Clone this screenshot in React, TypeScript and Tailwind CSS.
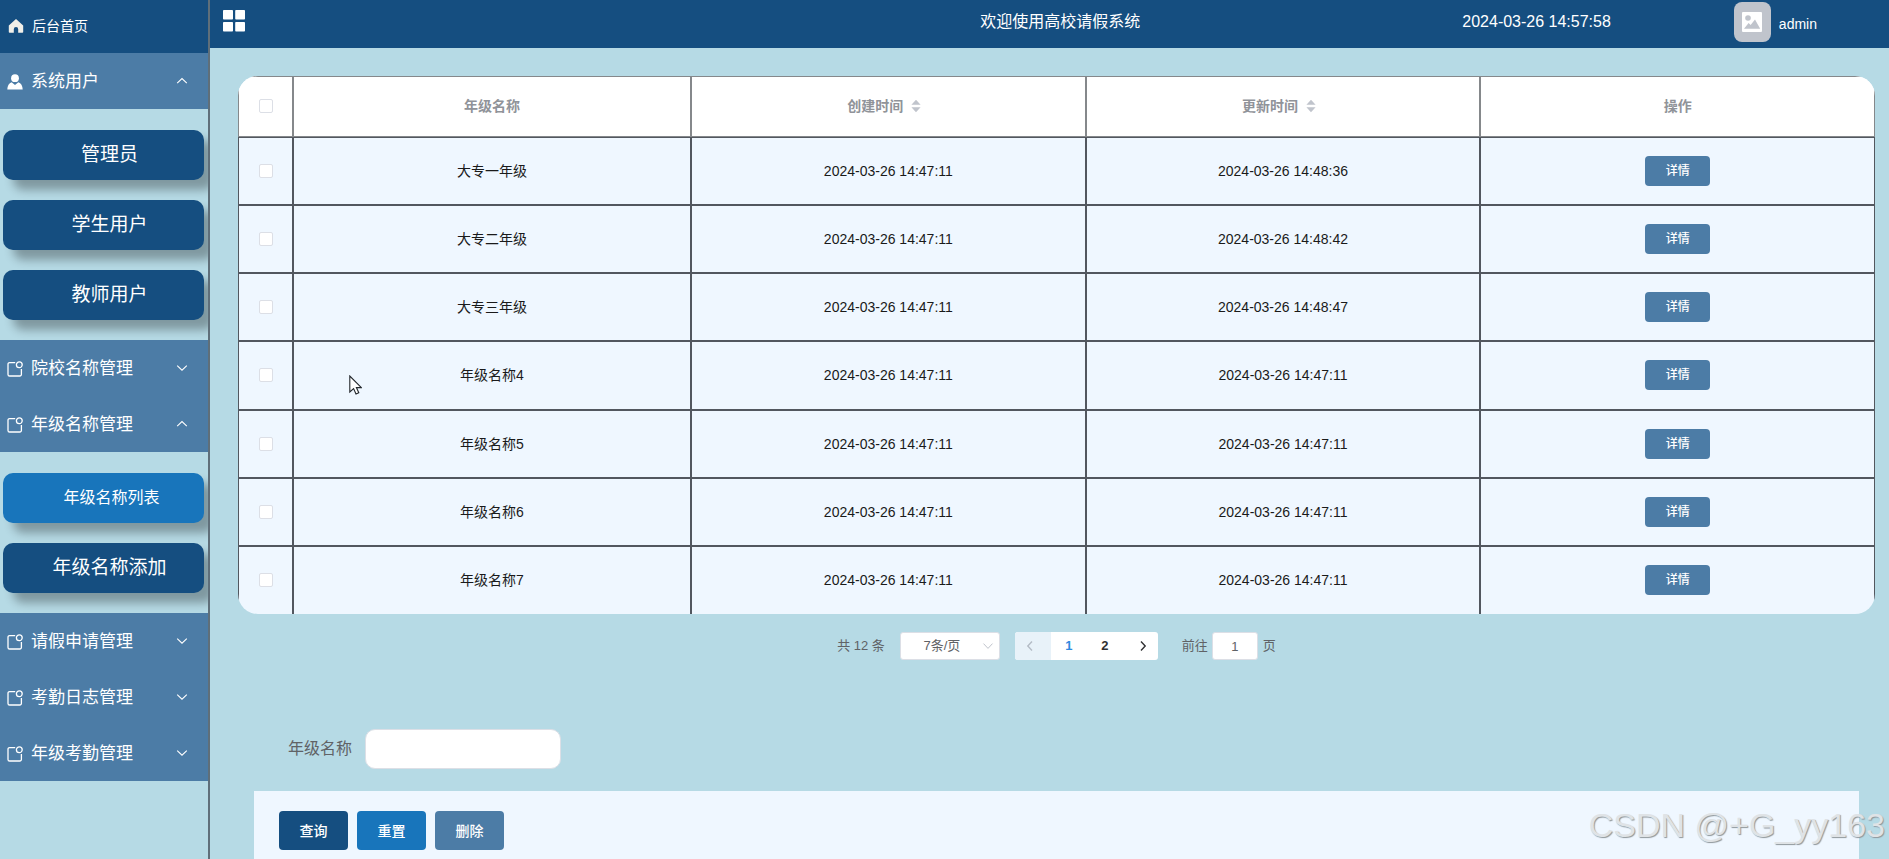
import { useState } from 'react'

type SubItem = { label: string; active?: boolean }
type Group = { label: string; icon: 'user' | 'module'; items?: SubItem[] }

const groups: Group[] = [
  {
    label: '系统用户',
    icon: 'user',
    items: [{ label: '管理员' }, { label: '学生用户' }, { label: '教师用户' }],
  },
  { label: '院校名称管理', icon: 'module' },
  {
    label: '年级名称管理',
    icon: 'module',
    items: [{ label: '年级名称列表', active: true }, { label: '年级名称添加' }],
  },
  { label: '请假申请管理', icon: 'module' },
  { label: '考勤日志管理', icon: 'module' },
  { label: '年级考勤管理', icon: 'module' },
]

const rows = [
  { name: '大专一年级', created: '2024-03-26 14:47:11', updated: '2024-03-26 14:48:36' },
  { name: '大专二年级', created: '2024-03-26 14:47:11', updated: '2024-03-26 14:48:42' },
  { name: '大专三年级', created: '2024-03-26 14:47:11', updated: '2024-03-26 14:48:47' },
  { name: '年级名称4', created: '2024-03-26 14:47:11', updated: '2024-03-26 14:47:11' },
  { name: '年级名称5', created: '2024-03-26 14:47:11', updated: '2024-03-26 14:47:11' },
  { name: '年级名称6', created: '2024-03-26 14:47:11', updated: '2024-03-26 14:47:11' },
  { name: '年级名称7', created: '2024-03-26 14:47:11', updated: '2024-03-26 14:47:11' },
]

function HomeIcon() {
  return (
    <svg viewBox="0 0 16 16" className="size-4 shrink-0 fill-[#f0efe9]" aria-hidden="true">
      <path d="M8 1 L15.2 7.4 V14 a.8 .8 0 0 1 -.8 .8 H10.2 V11.2 a2.2 2.2 0 0 0 -4.4 0 V14.8 H1.6 a.8 .8 0 0 1 -.8 -.8 V7.4 Z" />
    </svg>
  )
}

function UserIcon() {
  return (
    <svg viewBox="0 0 16 16" className="size-4 shrink-0 fill-white" aria-hidden="true">
      <circle cx="8" cy="4.2" r="3.9" />
      <path d="M4.6 8.2 L8 11 L11.4 8.2 C14 9 15.6 11.6 15.7 15.6 H.3 C.4 11.6 2 9 4.6 8.2 Z" />
    </svg>
  )
}

function ModuleIcon() {
  return (
    <svg viewBox="0 0 16 16" className="size-4 shrink-0 fill-none stroke-white" strokeWidth="1.3" aria-hidden="true">
      <path d="M8.2 1.6 H2.6 A1.6 1.6 0 0 0 1 3.2 V13.4 A1.6 1.6 0 0 0 2.6 15 H12.8 A1.6 1.6 0 0 0 14.4 13.4 V8" />
      <circle cx="12.3" cy="3.8" r="2.9" />
    </svg>
  )
}

function Chevron({ up }: { up?: boolean }) {
  return (
    <svg viewBox="0 0 12 12" className="mb-0.5 size-3 shrink-0 fill-none stroke-white" strokeWidth="1.1" aria-hidden="true">
      <path d={up ? 'M1.2 8.2 L6 3.6 L10.8 8.2' : 'M1.2 3.6 L6 8.2 L10.8 3.6'} />
    </svg>
  )
}

function SortIcon() {
  return (
    <svg viewBox="0 0 10 14" className="h-3.5 w-2.5 fill-[#c0c4cc]" aria-hidden="true">
      <path d="M5 .8 L9.6 5.8 H.4 Z M5 13.2 L9.6 8.2 H.4 Z" />
    </svg>
  )
}

function Sidebar() {
  return (
    <nav className="w-[210px] shrink-0 overflow-hidden border-r-2 border-[#5f6f7a] text-white">
      <a href="#home" className="flex h-[53px] items-center gap-2 bg-[#154e80] pb-0.5 pl-2 text-sm">
        <HomeIcon />
        后台首页
      </a>
      {groups.map((group) => (
        <section key={group.label}>
          <button type="button" className="flex h-14 w-full items-center gap-2 bg-[#4c7ca6] pt-0.5 pr-5 pl-[7px] text-left text-[17px]">
            {group.icon === 'user' ? <UserIcon /> : <ModuleIcon />}
            <span className="flex-1">{group.label}</span>
            <Chevron up={Boolean(group.items)} />
          </button>
          {group.items && (
            <ul className="flex flex-col gap-5 pt-[21px] pr-1 pb-5 pl-[3px]">
              {group.items.map((item) => (
                <li key={item.label}>
                  <a
                    href={`#${item.label}`}
                    className={
                      item.active
                        ? 'flex h-[50px] items-center justify-center rounded-[10px] bg-[#1875bb] pl-4 text-base shadow-[10px_10px_10px_rgba(0,0,0,0.3)]'
                        : 'flex h-[50px] items-center justify-center rounded-[10px] bg-[#154e80] pl-3 text-[19px] shadow-[10px_10px_10px_rgba(0,0,0,0.3)]'
                    }
                  >
                    {item.label}
                  </a>
                </li>
              ))}
            </ul>
          )}
        </section>
      ))}
    </nav>
  )
}

function TopBar() {
  return (
    <header className="flex h-12 shrink-0 items-center bg-[#154e80] pr-[72px] pb-1 pl-[13px] text-white">
      <button type="button" aria-label="菜单" className="mb-0.5">
        <svg viewBox="0 0 22 22" className="size-[22px] fill-white" aria-hidden="true">
          <rect x="0" y="0" width="10" height="9.6" rx=".8" />
          <rect x="12.2" y="0" width="9.8" height="9.6" rx=".8" />
          <rect x="0" y="12" width="10" height="9.6" rx=".8" />
          <rect x="12.2" y="12" width="9.8" height="9.6" rx=".8" />
        </svg>
      </button>
      <h1 className="ml-auto text-base">欢迎使用高校请假系统</h1>
      <time className="ml-[322px] text-base">2024-03-26 14:57:58</time>
      <div className="ml-[123px] flex items-center gap-2 text-sm">
        <span className="flex h-10 w-[37px] items-center justify-center rounded-lg bg-[#c0c4cc]">
          <svg viewBox="0 0 20 20" className="size-5" aria-hidden="true">
            <rect width="20" height="20" rx="1" fill="#fff" />
            <circle cx="6" cy="6" r="2.8" fill="#c0c4cc" />
            <path d="M2 16.8 L6.6 11 L8.6 13 L13 7.6 L18.2 16.8 Z" fill="#c0c4cc" />
          </svg>
        </span>
        <span className="pt-1">admin</span>
      </div>
    </header>
  )
}

const checkbox =
  'block mx-auto size-3.5 appearance-none rounded-xs border border-[#dcdfe6] bg-white checked:bg-[#1875bb]'
const headCell = 'border border-[#85888b] bg-white pb-0.5 font-bold text-[#909399]'
const bodyCell = 'border border-[#52575f] text-center group-last:border-b-0'

function GradeTable() {
  return (
    <div className="overflow-hidden rounded-[20px] bg-[#eff7ff]">
      <table className="h-[538px] w-full table-fixed border-separate border-spacing-0 text-sm text-[#1a1a1a]">
        <colgroup>
          <col className="w-[55px]" />
          <col className="w-[398px]" />
          <col />
          <col />
          <col />
        </colgroup>
        <thead>
          <tr className="h-[61px]">
            <th className={headCell}>
              <input type="checkbox" aria-label="全选" className={checkbox} />
            </th>
            <th className={headCell}>年级名称</th>
            {['创建时间', '更新时间'].map((label) => (
              <th key={label} className={headCell}>
                <button type="button" className="inline-flex items-center gap-2 pr-2 font-bold">
                  {label}
                  <SortIcon />
                </button>
              </th>
            ))}
            <th className={headCell}>操作</th>
          </tr>
        </thead>
        <tbody>
          {rows.map((row) => (
            <tr key={row.name} className="group h-[68px]">
              <td className={bodyCell}>
                <input type="checkbox" aria-label={row.name} className={checkbox} />
              </td>
              <td className={bodyCell}>{row.name}</td>
              <td className={bodyCell}>{row.created}</td>
              <td className={bodyCell}>{row.updated}</td>
              <td className={bodyCell}>
                <button type="button" className="h-[30px] w-[65px] rounded bg-[#4c7ca6] text-xs font-medium text-white">
                  详情
                </button>
              </td>
            </tr>
          ))}
        </tbody>
      </table>
    </div>
  )
}

function Pagination() {
  const [jump, setJump] = useState('1')
  return (
    <div className="mt-[18px] flex h-7 items-center justify-center text-[13px] text-[#606266]">
      <span>共 12 条</span>
      <div className="relative ml-[15px]">
        <select
          aria-label="每页条数"
          className="block h-7 w-[100px] appearance-none rounded-[3px] border border-[#dcdfe6] bg-white pr-4 text-center"
        >
          <option>7条/页</option>
        </select>
        <svg
          viewBox="0 0 12 12"
          className="pointer-events-none absolute top-2 right-1.5 size-3 fill-none stroke-[#c0c4cc]"
          aria-hidden="true"
        >
          <path d="M1.5 3.6 L6 8.4 L10.5 3.6" />
        </svg>
      </div>
      <div className="ml-[15px] flex h-7 overflow-hidden rounded-[3px] bg-white font-bold text-[#303133]">
        <button type="button" disabled aria-label="上一页" className="flex w-9 items-center justify-center bg-[#e8f2f9] pr-1.5">
          <svg viewBox="0 0 12 12" className="size-3 fill-none stroke-[#b4bcc6]" strokeWidth="1.4" aria-hidden="true">
            <path d="M8 1.6 L3.8 6 L8 10.4" />
          </svg>
        </button>
        <button type="button" className="w-9 text-[#2f8ae0]">
          1
        </button>
        <button type="button" className="w-9">
          2
        </button>
        <button type="button" aria-label="下一页" className="flex w-[35px] items-center justify-center pl-1.5">
          <svg viewBox="0 0 12 12" className="size-3 fill-none stroke-[#303133]" strokeWidth="1.4" aria-hidden="true">
            <path d="M4 1.6 L8.2 6 L4 10.4" />
          </svg>
        </button>
      </div>
      <label className="ml-6 flex items-center">
        前往
        <input
          value={jump}
          onChange={(e) => setJump(e.target.value)}
          className="mr-[5px] ml-1 h-7 w-[46px] rounded-[3px] border border-[#dcdfe6] bg-white text-center"
        />
        页
      </label>
    </div>
  )
}

function SearchForm() {
  return (
    <>
      <div className="mt-[69px] flex items-center gap-[13px] pl-[50px]">
        <label htmlFor="grade-name" className="text-base text-[#606266]">
          年级名称
        </label>
        <input id="grade-name" className="h-10 w-[196px] rounded-[10px] border border-[#dcdfe6] bg-white px-3 text-sm" />
      </div>
      <div className="mt-[22px] mr-4 ml-4 flex flex-1 items-start gap-[9px] bg-[#eff7ff] pt-5 pl-[25px] text-sm font-medium text-white">
        <button type="button" className="h-[39px] w-[69px] rounded bg-[#154e80]">
          查询
        </button>
        <button type="button" className="h-[39px] w-[69px] rounded bg-[#1875bb]">
          重置
        </button>
        <button type="button" className="h-[39px] w-[69px] rounded bg-[#4c7ca6]">
          删除
        </button>
      </div>
    </>
  )
}

export default function App() {
  return (
    <div className="relative flex h-screen overflow-hidden bg-[#b6dae5] font-['Liberation_Sans','Noto_Sans_CJK_SC',sans-serif]">
      <Sidebar />
      <div className="flex min-w-0 flex-1 flex-col">
        <TopBar />
        <main className="flex flex-1 flex-col pt-7 pr-3.5 pl-7">
          <GradeTable />
          <Pagination />
          <SearchForm />
        </main>
      </div>
      <svg
        viewBox="0 0 13 20"
        className="pointer-events-none absolute top-[375px] left-[349px] h-5 w-[13px]"
        aria-hidden="true"
      >
        <path
          d="M.8 1 V17 L4.6 13.6 L7 19 L9.8 17.8 L7.4 12.6 H12.4 Z"
          fill="#fff"
          stroke="#22262b"
          strokeWidth="1.1"
        />
      </svg>
      <div className="pointer-events-none absolute right-1 bottom-3.5 text-[34px] leading-[40px] text-[#dfe3e6] [text-shadow:1px_1px_1px_#8f979c]">
        CSDN @+G_yy163
      </div>
    </div>
  )
}
